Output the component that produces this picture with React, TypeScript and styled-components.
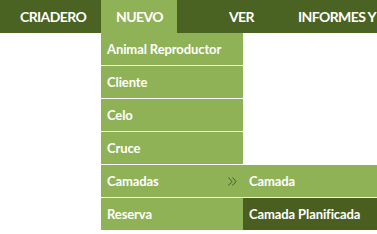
import styled, { createGlobalStyle } from 'styled-components';

const GlobalStyle = createGlobalStyle`
  html, body, #root {
    margin: 0;
    padding: 0;
    background: #ffffff;
    height: 100%;
  }
  body {
    font-family: Lato, 'Open Sans', sans-serif;
  }
`;

const DARK = '#4b6322';
const LIGHT = '#90b257';

const Page = styled.div`
  width: 377px;
  height: 234px;
  overflow: hidden;
`;

const NavBar = styled.ul`
  display: flex;
  align-items: stretch;
  height: 33px;
  margin: 0;
  padding: 0;
  list-style: none;
  background: ${DARK};
  white-space: nowrap;
`;

const NavItem = styled.li<{ $width?: number; $active?: boolean; $pad: number }>`
  position: relative;
  display: flex;
  align-items: center;
  width: ${({ $width }) => ($width ? `${$width}px` : 'auto')};
  padding-left: ${({ $pad }) => `${$pad}px`};
  box-sizing: border-box;
  flex-shrink: 0;
  background: ${({ $active }) => ($active ? LIGHT : 'transparent')};
  color: #ffffff;
  font-size: 14px;
  font-weight: 700;
  letter-spacing: -0.6px;
`;

const Dropdown = styled.ul`
  position: absolute;
  top: 33px;
  left: 0;
  width: 142px;
  margin: 0;
  padding: 0;
  list-style: none;
  z-index: 2;
  letter-spacing: -0.1px;
`;

const MenuItem = styled.li<{ $dark?: boolean; $last?: boolean }>`
  position: relative;
  display: flex;
  align-items: center;
  justify-content: space-between;
  height: 32px;
  padding: 0 6px 0 6px;
  background: ${({ $dark }) => ($dark ? '#4a5f1f' : LIGHT)};
  border-bottom: ${({ $last }) => ($last ? 'none' : '1px solid #ffffff')};
  color: #ffffff;
  font-size: 13px;
  font-weight: 700;
`;

const SubMenu = styled.ul`
  position: absolute;
  top: 0;
  left: 142px;
  width: 160px;
  margin: 0;
  padding: 0;
  list-style: none;
`;

const Chevrons = () => (
  <svg width="9" height="9" viewBox="0 0 9 9" fill="none" stroke="#3a3a3a" strokeWidth="0.8">
    <path d="M0.5 0.5 L4 4.5 L0.5 8.5" />
    <path d="M4.5 0.5 L8 4.5 L4.5 8.5" />
  </svg>
);

const App = () => {
  return (
    <Page>
      <GlobalStyle />
      <NavBar>
        <NavItem $width={101} $pad={20}>CRIADERO</NavItem>
        <NavItem $width={76} $pad={15} $active>
          NUEVO
          <Dropdown>
            <MenuItem>Animal Reproductor</MenuItem>
            <MenuItem>Cliente</MenuItem>
            <MenuItem>Celo</MenuItem>
            <MenuItem>Cruce</MenuItem>
            <MenuItem>
              <span>Camadas</span>
              <Chevrons />
              <SubMenu>
                <MenuItem>Camada</MenuItem>
                <MenuItem $dark $last>
                  Camada Planificada
                </MenuItem>
              </SubMenu>
            </MenuItem>
            <MenuItem $last>Reserva</MenuItem>
          </Dropdown>
        </NavItem>
        <NavItem $pad={52}>VER</NavItem>
        <NavItem $pad={44}>INFORMES Y</NavItem>
      </NavBar>
    </Page>
  );
};

export default App;
